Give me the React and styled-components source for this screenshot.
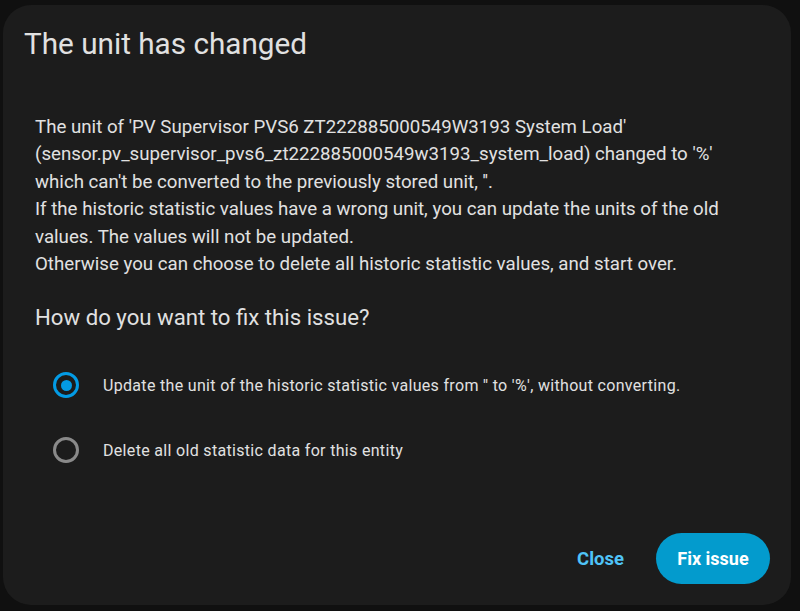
import styled, { createGlobalStyle } from 'styled-components'

const GlobalStyle = createGlobalStyle`
  html, body {
    margin: 0;
    padding: 0;
    background: #111111;
    font-family: Roboto, 'Noto Sans', sans-serif;
  }
`

const Backdrop = styled.div`
  width: 800px;
  height: 611px;
  box-sizing: border-box;
  padding: 5px 9px 6px 3px;
  background: #101010;
`

const Dialog = styled.div`
  height: 100%;
  box-sizing: border-box;
  background: #1c1c1c;
  border-radius: 28px;
  display: flex;
  flex-direction: column;
  color: #e1e1e1;
`

const Title = styled.h2`
  margin: 0;
  padding: 21px 24px 0 21px;
  font-size: 29.7px;
  font-weight: 400;
  line-height: 36px;
  color: #e1e1e1;
`

const Content = styled.div`
  padding: 52px 24px 0 32px;
  flex: 1;
`

const Text = styled.p`
  margin: 0;
  font-size: 18.7px;
  line-height: 27.4px;
  white-space: nowrap;
  color: #e1e1e1;
`

const Question = styled.div`
  margin-top: 25px;
  font-size: 22.2px;
  line-height: 28px;
  color: #e1e1e1;
`

const Options = styled.div`
  margin-top: 30px;
  display: flex;
  flex-direction: column;
  gap: 17px;
`

const Option = styled.label`
  display: flex;
  align-items: center;
  height: 48px;
  padding-left: 18px;
  gap: 24px;
  font-size: 16px;
  letter-spacing: 0.32px;
  color: #e1e1e1;
`

const Radio = styled.span`
  width: 20px;
  height: 20px;
  border-radius: 50%;
  border: 3px solid ${(p) => (p.checked ? '#039be5' : '#8a8a8a')};
  display: flex;
  align-items: center;
  justify-content: center;
  flex-shrink: 0;
  &::after {
    content: '';
    width: 11px;
    height: 11px;
    border-radius: 50%;
    background: #039be5;
    display: ${(p) => (p.checked ? 'block' : 'none')};
  }
`

const Actions = styled.div`
  display: flex;
  justify-content: flex-end;
  align-items: center;
  gap: 24px;
  padding: 0 21px 21px 0;
`

const TextButton = styled.button`
  border: none;
  background: none;
  color: #4fc3f7;
  font-family: inherit;
  font-size: 18.5px;
  font-weight: 700;
  padding: 0 8px;
  height: 51px;
`

const FilledButton = styled.button`
  border: none;
  background: #039bcd;
  color: #ffffff;
  font-family: inherit;
  font-size: 18px;
  font-weight: 700;
  width: 114px;
  height: 51px;
  border-radius: 26px;
`

const options = [
  { label: "Update the unit of the historic statistic values from '' to '%', without converting.", checked: true },
  { label: 'Delete all old statistic data for this entity', checked: false },
]

const App = () => {
  return (
    <Backdrop>
      <GlobalStyle />
      <Dialog>
        <Title>The unit has changed</Title>
        <Content>
          <Text>
            The unit of 'PV Supervisor PVS6 ZT222885000549W3193 System Load'
            <br />
            (sensor.pv_supervisor_pvs6_zt222885000549w3193_system_load) changed to '%'
            <br />
            which can't be converted to the previously stored unit, ''.
            <br />
            If the historic statistic values have a wrong unit, you can update the units of the old
            <br />
            values. The values will not be updated.
            <br />
            Otherwise you can choose to delete all historic statistic values, and start over.
          </Text>
          <Question>How do you want to fix this issue?</Question>
          <Options>
            {options.map((item, index) => (
              <Option key={index}>
                <Radio checked={item.checked} />
                {item.label}
              </Option>
            ))}
          </Options>
        </Content>
        <Actions>
          <TextButton>Close</TextButton>
          <FilledButton>Fix issue</FilledButton>
        </Actions>
      </Dialog>
    </Backdrop>
  )
}

export default App
